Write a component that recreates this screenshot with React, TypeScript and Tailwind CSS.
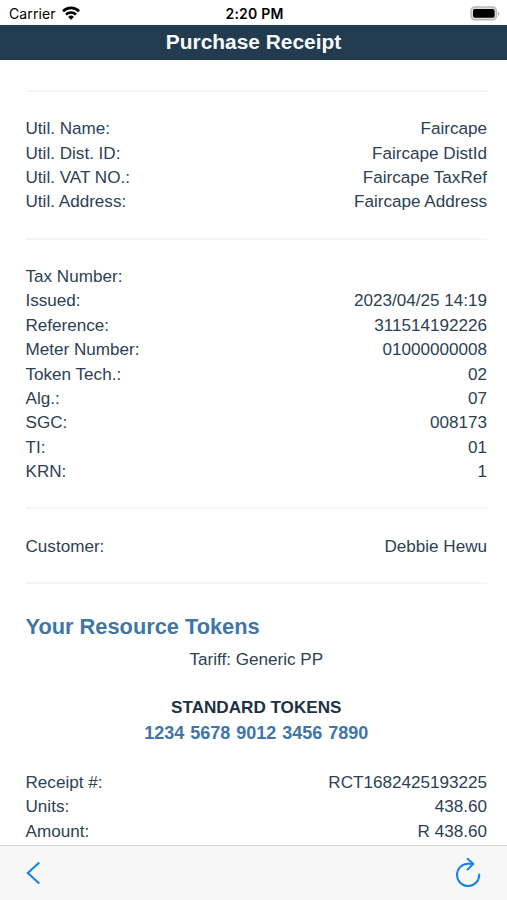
type RowProps = {
  label: string
  value?: string
}

const utility: RowProps[] = [
  { label: 'Util. Name:', value: 'Faircape' },
  { label: 'Util. Dist. ID:', value: 'Faircape DistId' },
  { label: 'Util. VAT NO.:', value: 'Faircape TaxRef' },
  { label: 'Util. Address:', value: 'Faircape Address' },
]

const meter: RowProps[] = [
  { label: 'Tax Number:' },
  { label: 'Issued:', value: '2023/04/25 14:19' },
  { label: 'Reference:', value: '311514192226' },
  { label: 'Meter Number:', value: '01000000008' },
  { label: 'Token Tech.:', value: '02' },
  { label: 'Alg.:', value: '07' },
  { label: 'SGC:', value: '008173' },
  { label: 'TI:', value: '01' },
  { label: 'KRN:', value: '1' },
]

const receipt: RowProps[] = [
  { label: 'Receipt #:', value: 'RCT1682425193225' },
  { label: 'Units:', value: '438.60' },
  { label: 'Amount:', value: 'R 438.60' },
]

function Rows({ items }: { items: RowProps[] }) {
  return (
    <dl>
      {items.map((item) => (
        <div key={item.label} className="flex h-[24.4px] items-center justify-between whitespace-nowrap">
          <dt>{item.label}</dt>
          <dd>{item.value}</dd>
        </div>
      ))}
    </dl>
  )
}

function Divider() {
  return <hr className="mt-[22.8px] mb-[25.4px] h-[2px] border-0 bg-[#f4f5f5]" />
}

function StatusBar() {
  return (
    <div className="grid h-[25px] shrink-0 grid-cols-3 items-center pt-[3px] pr-[7px] pl-[9px] font-[Inter,sans-serif] text-black">
      <div className="flex items-center gap-[6px]">
        <span className="text-[14px] leading-none tracking-[0.1px]">Carrier</span>
        <svg width="18" height="14" viewBox="0 0 18 14" fill="none" stroke="#000" strokeWidth="2.6" className="-mt-[2px]">
          <path d="M1 5.2a11.4 11.4 0 0 1 16 0" />
          <path d="M4 8.6a7.1 7.1 0 0 1 10 0" />
          <path d="M6.1 11a4.1 4.1 0 0 1 5.8 0L9 13.8Z" fill="#000" stroke="none" />
        </svg>
      </div>
      <span className="text-center text-[14px] leading-none font-semibold tracking-[0.2px]">2:20 PM</span>
      <svg width="31" height="15" viewBox="0 0 31 15" className="-mt-[2px] justify-self-end">
        <rect x="2" y="1" width="25.4" height="12.8" rx="3.8" fill="#ddd" stroke="#b9b9b9" strokeWidth="1.4" />
        <rect x="4" y="3" width="21.6" height="8.8" rx="1.8" fill="#000" />
        <path d="M29 5.2c1.8.8 1.8 3.8 0 4.6Z" fill="#b0b0b0" />
      </svg>
    </div>
  )
}

export default function App() {
  return (
    <div className="flex h-[900px] w-[507px] flex-col overflow-hidden bg-white font-['Liberation_Sans',Arial,sans-serif] text-[17.1px] leading-[24.4px] text-[#2c4152]">
      <StatusBar />
      <header className="flex h-[35px] shrink-0 items-center justify-center bg-[#223b4e] text-[20.9px] font-bold text-[#f8fbfe]">
        <h1 className="-mt-px">Purchase Receipt</h1>
      </header>

      <main className="min-h-0 flex-1 overflow-hidden pt-[7px] pr-5 pl-[25.5px]">
        <Divider />
        <Rows items={utility} />
        <Divider />
        <Rows items={meter} />
        <Divider />
        <Rows items={[{ label: 'Customer:', value: 'Debbie Hewu' }]} />
        <Divider />
        <h2 className="mt-[29px] text-[21.8px] leading-[28px] font-bold text-[#3f76a6]">Your Resource Tokens</h2>
        <p className="mt-[7px] text-center">Tariff: Generic PP</p>
        <p className="mt-6 text-center font-bold text-[#1c3143]">STANDARD TOKENS</p>
        <p className="text-center text-[18px] font-bold [word-spacing:1px] text-[#3f76a6]">1234 5678 9012 3456 7890</p>
        <div className="mt-[26px]">
          <Rows items={receipt} />
        </div>
      </main>

      <nav className="flex h-[55px] shrink-0 items-center justify-between border-t border-[#d8d9da] bg-[#f7f7f7] pr-[26px] pl-[26px] text-[#1480f0]">
        <svg width="16" height="24" viewBox="0 0 16 24" fill="none" stroke="currentColor" strokeWidth="2">
          <path d="M13.3 1.6 1.8 12l11.5 10.6" />
        </svg>
        <svg width="26" height="30" viewBox="0 0 26 30" fill="none" stroke="currentColor" strokeWidth="2" strokeLinecap="round" strokeLinejoin="round" className="-mt-[3px]">
          <path d="M24.2 17.5A11.1 11.1 0 1 1 13 6.8h5" />
          <path d="m12.6 1.8 5.6 5-5.6 5.8" />
        </svg>
      </nav>
    </div>
  )
}
